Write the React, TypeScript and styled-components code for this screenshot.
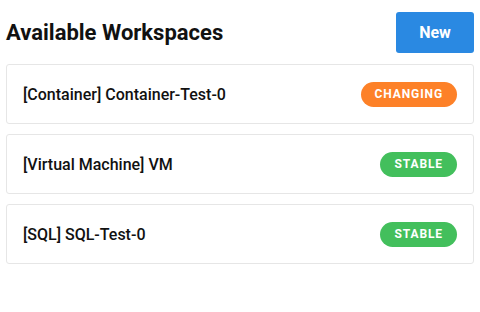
import React from 'react';
import styled, { createGlobalStyle } from 'styled-components';

const GlobalStyle = createGlobalStyle`
  body {
    margin: 0;
    background: #ffffff;
    font-family: Roboto, "Liberation Sans", sans-serif;
    color: #111111;
  }
`;

const Page = styled.div`
  padding: 12px 6px;
  display: flex;
  flex-direction: column;
  gap: 11px;
`;

const Header = styled.div`
  display: flex;
  align-items: center;
  justify-content: space-between;
`;

const Title = styled.h1`
  margin: 0;
  font-size: 22px;
  font-weight: 700;
  color: #111111;
`;

const NewButton = styled.button`
  width: 78px;
  height: 41px;
  border: none;
  border-radius: 3px;
  background: #2a89e2;
  color: #ffffff;
  font-family: Roboto, "Liberation Sans", sans-serif;
  font-size: 16px;
  font-weight: 700;
  cursor: pointer;
`;

const List = styled.div`
  display: flex;
  flex-direction: column;
  gap: 10px;
`;

const Card = styled.div`
  height: 60px;
  box-sizing: border-box;
  border: 1px solid #e6e6e6;
  border-radius: 3px;
  padding: 0 16px;
  display: flex;
  align-items: center;
  justify-content: space-between;
`;

const Name = styled.span`
  font-size: 16px;
  font-weight: 500;
  color: #111111;
`;

const Badge = styled.span<{ $color: string }>`
  height: 25px;
  padding: 0 14px;
  border-radius: 13px;
  background: ${p => p.$color};
  color: #ffffff;
  font-size: 12px;
  font-weight: 700;
  letter-spacing: 0.9px;
  display: flex;
  align-items: center;
`;

const workspaces = [
  { name: '[Container] Container-Test-0', status: 'CHANGING', color: '#fd8128' },
  { name: '[Virtual Machine] VM', status: 'STABLE', color: '#43bf5c' },
  { name: '[SQL] SQL-Test-0', status: 'STABLE', color: '#43bf5c' },
];

export default function App() {
  return (
    <>
      <GlobalStyle />
      <Page>
        <Header>
          <Title>Available Workspaces</Title>
          <NewButton>New</NewButton>
        </Header>
        <List>
          {workspaces.map(w => (
            <Card key={w.name}>
              <Name>{w.name}</Name>
              <Badge $color={w.color}>{w.status}</Badge>
            </Card>
          ))}
        </List>
      </Page>
    </>
  );
}
